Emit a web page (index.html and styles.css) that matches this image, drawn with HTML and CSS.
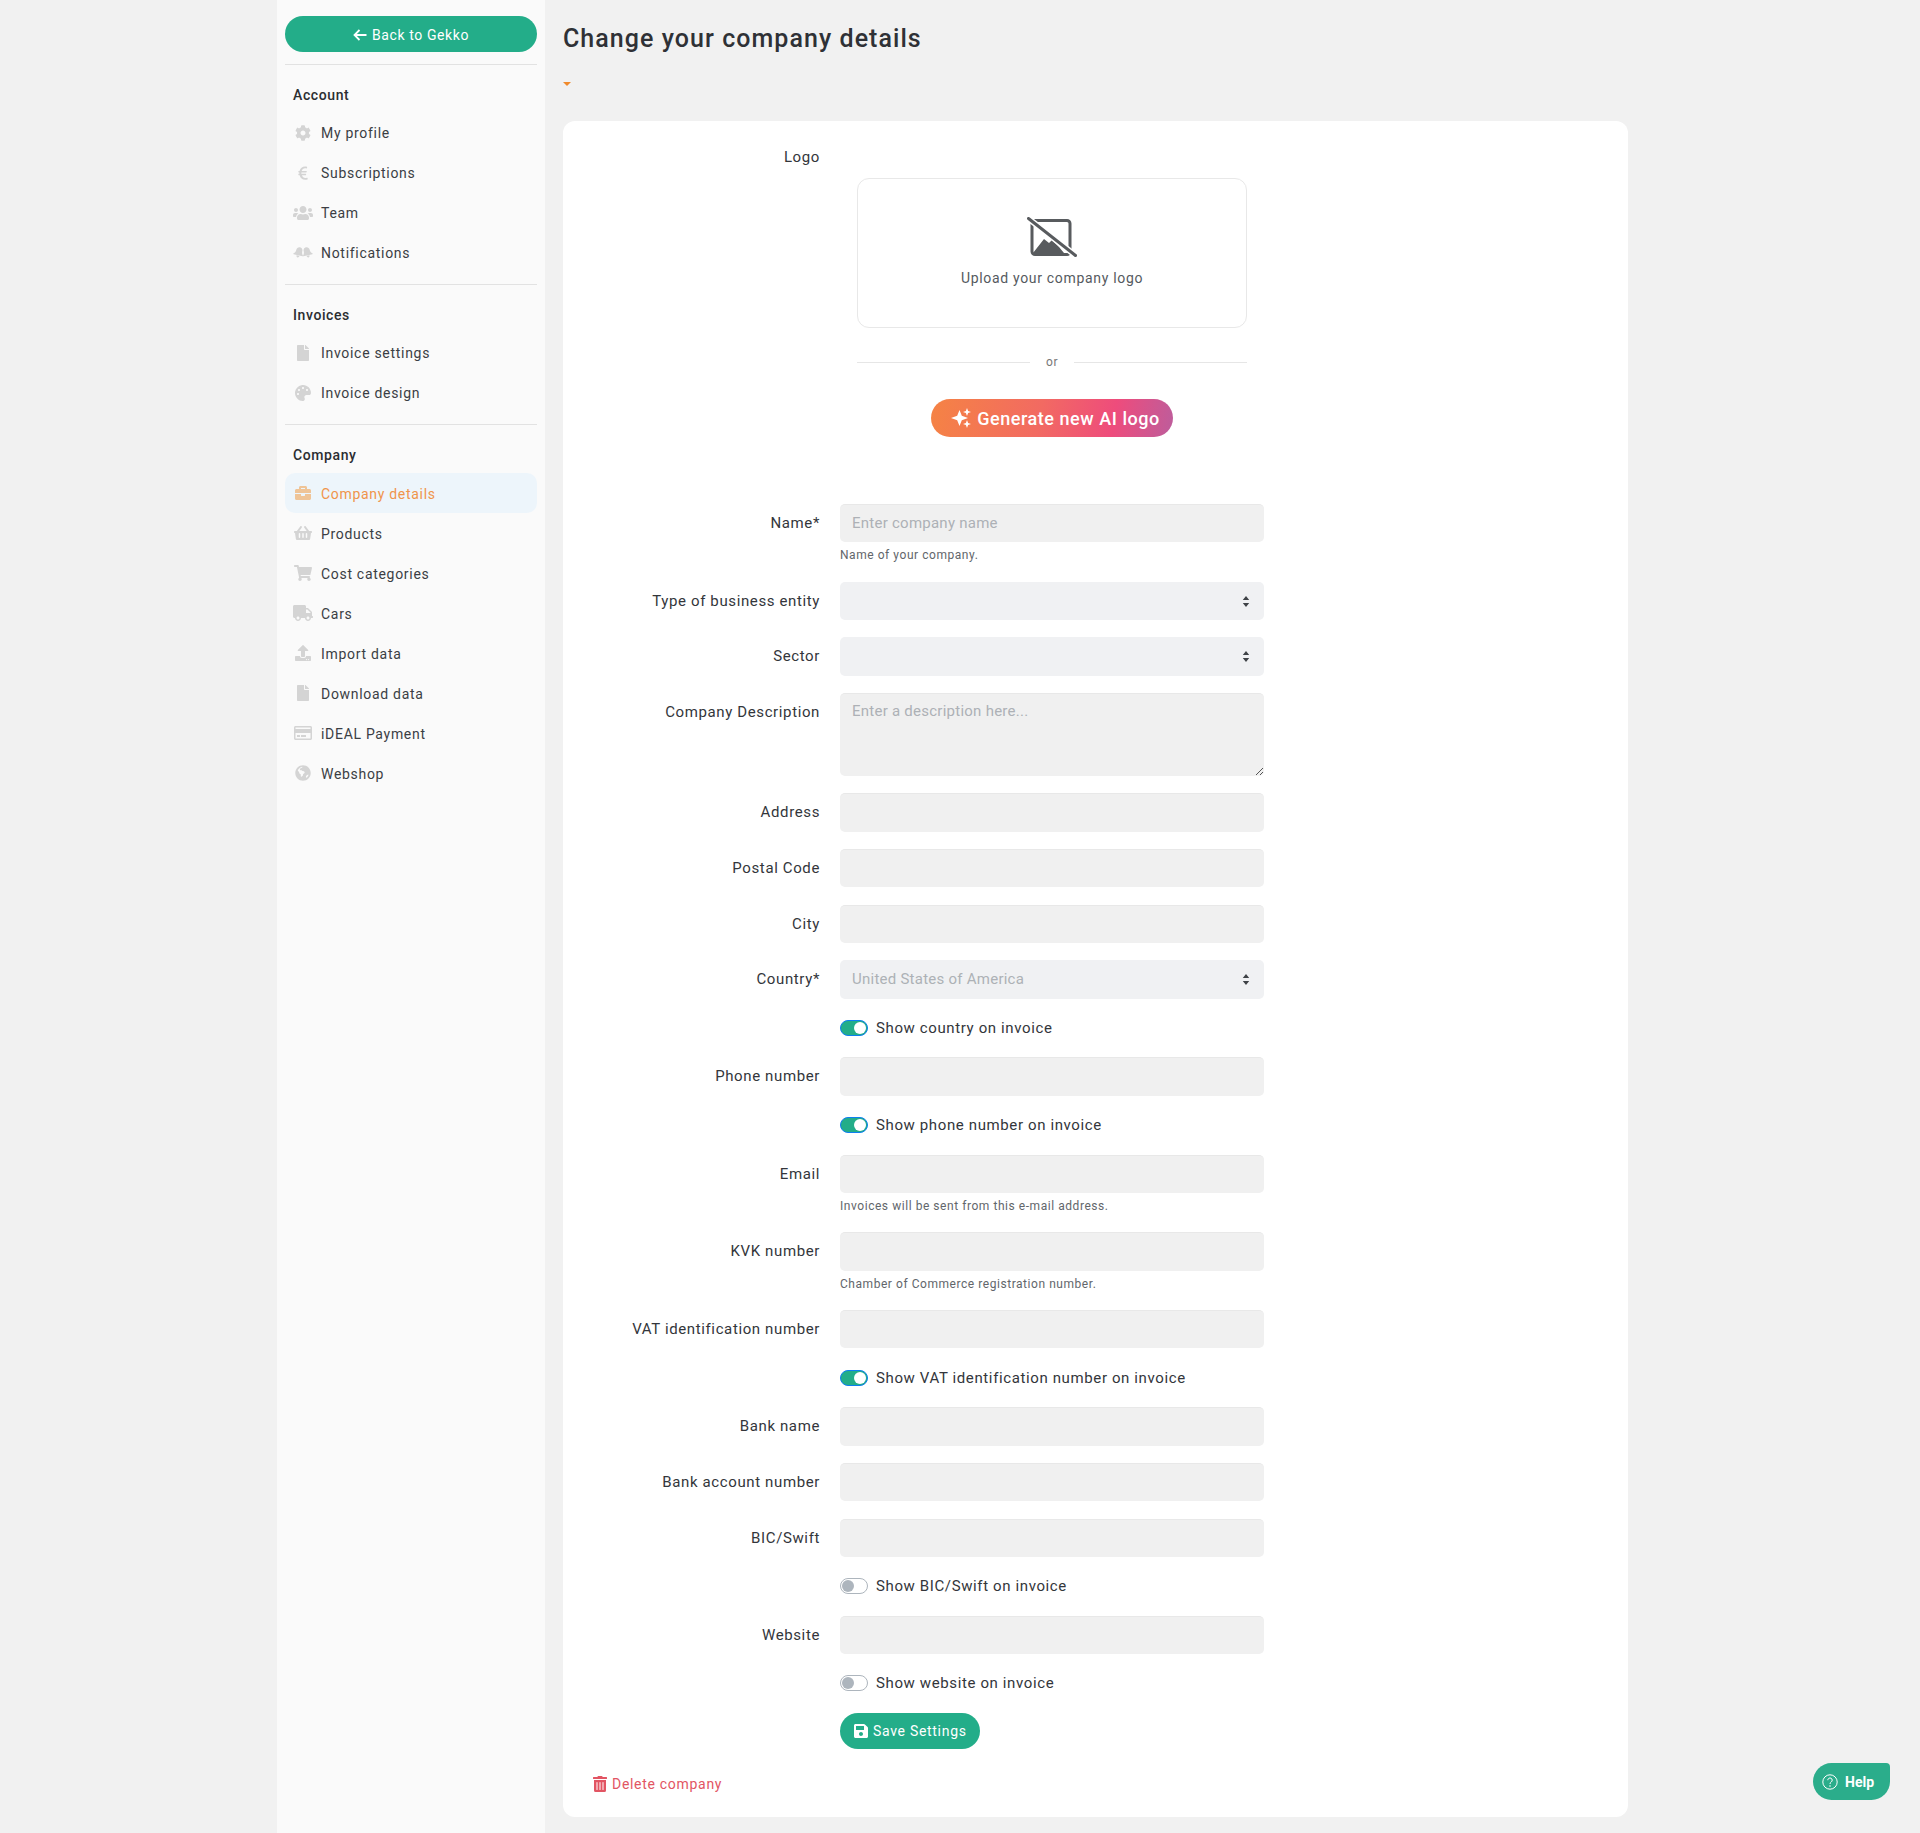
FILE: index.html
```html
<!DOCTYPE html>
<html lang="en">
<head>
<meta charset="utf-8">
<title>Change your company details</title>
<link rel="stylesheet" href="styles.css">
</head>
<body>
<svg class="sprite" aria-hidden="true">
  <symbol id="i-cog" viewBox="0 0 512 512"><path d="M487.4 315.7l-42.6-24.6c4.3-23.2 4.3-47 0-70.2l42.6-24.6c4.9-2.8 7.1-8.6 5.5-14-11.1-35.6-30-67.8-54.7-94.6-3.8-4.1-10-5.1-14.8-2.3L380.8 110c-17.9-15.4-38.5-27.3-60.8-35.1V25.8c0-5.6-3.9-10.5-9.4-11.7-36.7-8.2-74.3-7.8-109.2 0-5.5 1.2-9.4 6.1-9.4 11.7V75c-22.2 7.9-42.8 19.8-60.8 35.1L88.7 85.5c-4.9-2.8-11-1.9-14.8 2.3-24.7 26.7-43.6 58.9-54.7 94.6-1.7 5.4.6 11.2 5.5 14L67.3 221c-4.3 23.2-4.3 47 0 70.2l-42.6 24.6c-4.9 2.8-7.1 8.6-5.5 14 11.1 35.6 30 67.8 54.7 94.6 3.8 4.1 10 5.1 14.8 2.3l42.6-24.6c17.9 15.4 38.5 27.3 60.8 35.1v49.2c0 5.6 3.9 10.5 9.4 11.7 36.7 8.2 74.3 7.8 109.2 0 5.5-1.2 9.4-6.1 9.4-11.7v-49.2c22.2-7.9 42.8-19.8 60.8-35.1l42.6 24.6c4.9 2.8 11 1.9 14.8-2.3 24.7-26.7 43.6-58.9 54.7-94.6 1.5-5.5-.7-11.3-5.6-14.1zM256 336c-44.1 0-80-35.9-80-80s35.9-80 80-80 80 35.9 80 80-35.9 80-80 80z"/></symbol>
  <symbol id="i-euro" viewBox="0 0 320 512"><path d="M310 440c-5-19-7-27-13-33-4-4-10-3-14-2-12 4-30 8-50 8-51 0-92-32-109-85h120c6 0 11-4 12-10l5-23c2-7-4-15-12-15H109c-1-14-1-29 0-43h155c6 0 11-4 12-10l5-24c1-7-4-15-12-15H119c17-49 55-81 107-81 16 0 32 3 43 6 6 2 13-2 15-8l9-33c2-7-2-13-8-15-14-4-35-8-58-8-89 0-155 58-177 139H24c-7 0-12 5-12 12v24c0 7 5 12 12 12h20c-1 14-1 30 0 43H24c-7 0-12 5-12 12v23c0 7 5 12 12 12h29c20 90 85 147 176 147 28 0 53-6 72-13 6-2 11-9 9-15z"/></symbol>
  <symbol id="i-users" viewBox="0 0 640 512"><path d="M96 224c35.3 0 64-28.7 64-64s-28.7-64-64-64-64 28.7-64 64 28.7 64 64 64zm448 0c35.3 0 64-28.7 64-64s-28.7-64-64-64-64 28.7-64 64 28.7 64 64 64zm32 32h-64c-17.6 0-33.5 7.1-45.1 18.6 40.3 22.1 68.9 62 75.1 109.4h66c17.7 0 32-14.3 32-32v-32c0-35.3-28.7-64-64-64zm-256 0c61.9 0 112-50.1 112-112S381.9 32 320 32 208 82.1 208 144s50.1 112 112 112zm76.8 32h-8.3c-20.8 10-43.9 16-68.5 16s-47.6-6-68.5-16h-8.3C179.6 288 128 339.6 128 403.2V432c0 26.5 21.5 48 48 48h288c26.5 0 48-21.5 48-48v-28.8c0-63.6-51.6-115.2-115.2-115.2zm-223.7-13.4C161.5 263.1 145.6 256 128 256H64c-35.3 0-64 28.7-64 64v32c0 17.7 14.3 32 32 32h65.9c6.3-47.4 34.9-87.3 75.2-109.4z"/></symbol>
  <symbol id="i-bells" viewBox="0 0 640 512">
    <path transform="translate(185 240) rotate(14) scale(.82)" d="M0-210c-70 0-120 55-120 125 0 70-20 120-70 165-10 10-4 30 12 30h356c16 0 22-20 12-30-50-45-70-95-70-165 0-70-50-125-120-125zM-60 130c5 40 30 70 60 70s55-30 60-70z"/>
    <path transform="translate(455 240) rotate(-14) scale(.82)" d="M0-210c-70 0-120 55-120 125 0 70-20 120-70 165-10 10-4 30 12 30h356c16 0 22-20 12-30-50-45-70-95-70-165 0-70-50-125-120-125zM-60 130c5 40 30 70 60 70s55-30 60-70z"/>
  </symbol>
  <symbol id="i-file" viewBox="0 0 384 512"><path d="M224 136V0H24C10.7 0 0 10.7 0 24v464c0 13.3 10.7 24 24 24h336c13.3 0 24-10.7 24-24V160H248c-13.2 0-24-10.8-24-24zm160-14.1v6.1H256V0h6.1c6.4 0 12.5 2.5 17 7l97.9 98c4.5 4.5 7 10.6 7 16.9z"/></symbol>
  <symbol id="i-palette" viewBox="0 0 512 512"><path d="M204.3 5C104.9 24.4 24.8 104.3 5.2 203.4c-37 187 131.7 326.4 258.8 306.7 41.2-6.4 61.4-54.6 42.5-91.7-23.1-45.4 9.9-98.4 60.9-98.4h79.7c35.8 0 64.8-29.6 64.9-65.3C511.5 97.1 368.1-26.9 204.3 5zM96 320c-17.7 0-32-14.3-32-32s14.3-32 32-32 32 14.3 32 32-14.3 32-32 32zm32-128c-17.7 0-32-14.3-32-32s14.3-32 32-32 32 14.3 32 32-14.3 32-32 32zm128-64c-17.7 0-32-14.3-32-32s14.3-32 32-32 32 14.3 32 32-14.3 32-32 32zm128 64c-17.7 0-32-14.3-32-32s14.3-32 32-32 32 14.3 32 32-14.3 32-32 32z"/></symbol>
  <symbol id="i-briefcase" viewBox="0 0 512 512"><path d="M320 336c0 8.84-7.16 16-16 16h-96c-8.84 0-16-7.16-16-16v-48H0v144c0 25.6 22.4 48 48 48h416c25.6 0 48-22.4 48-48V288H320v48zm144-208h-80V80c0-25.6-22.4-48-48-48H176c-25.6 0-48 22.4-48 48v48H48c-25.6 0-48 22.4-48 48v80h512v-80c0-25.6-22.4-48-48-48zm-144 0H192V96h128v32z"/></symbol>
  <symbol id="i-basket" viewBox="0 0 576 512"><path d="M576 216v16c0 13.255-10.745 24-24 24h-8l-26.113 182.788C514.509 462.435 494.257 480 470.37 480H105.63c-23.887 0-44.139-17.565-47.518-41.212L32 256h-8c-13.255 0-24-10.745-24-24v-16c0-13.255 10.745-24 24-24h67.341l106.78-146.821c10.395-14.292 30.407-17.453 44.701-7.058 14.293 10.395 17.453 30.408 7.058 44.701L170.477 192h235.046L326.12 82.821c-10.395-14.292-7.234-34.306 7.059-44.701 14.291-10.395 34.306-7.235 44.701 7.058L484.659 192H552c13.255 0 24 10.745 24 24zM312 392V280c0-13.255-10.745-24-24-24s-24 10.745-24 24v112c0 13.255 10.745 24 24 24s24-10.745 24-24zm112 0V280c0-13.255-10.745-24-24-24s-24 10.745-24 24v112c0 13.255 10.745 24 24 24s24-10.745 24-24zm-224 0V280c0-13.255-10.745-24-24-24s-24 10.745-24 24v112c0 13.255 10.745 24 24 24s24-10.745 24-24z"/></symbol>
  <symbol id="i-cart" viewBox="0 0 576 512"><path d="M528.12 301.319l47.273-208C578.806 78.301 567.391 64 551.99 64H159.208l-9.166-44.81C147.758 8.021 137.93 0 126.529 0H24C10.745 0 0 10.745 0 24v16c0 13.255 10.745 24 24 24h69.883l70.248 343.435C147.325 417.1 136 435.222 136 456c0 30.928 25.072 56 56 56s56-25.072 56-56c0-15.674-6.447-29.835-16.824-40h209.647C430.447 426.165 424 440.326 424 456c0 30.928 25.072 56 56 56s56-25.072 56-56c0-22.172-12.888-41.332-31.579-50.405l5.517-24.276c3.413-15.018-8.002-29.319-23.403-29.319H218.117l-6.545-32h293.145c11.206 0 20.92-7.754 23.403-18.681z"/></symbol>
  <symbol id="i-truck" viewBox="0 0 640 512"><path d="M624 352h-16V243.9c0-12.7-5.1-24.9-14.1-33.9L494 110.1c-9-9-21.2-14.1-33.9-14.1H416V48c0-26.5-21.5-48-48-48H48C21.5 0 0 21.5 0 48v320c0 26.5 21.5 48 48 48h16c0 53 43 96 96 96s96-43 96-96h128c0 53 43 96 96 96s96-43 96-96h48c8.8 0 16-7.2 16-16v-32c0-8.8-7.2-16-16-16zM160 464c-26.5 0-48-21.5-48-48s21.5-48 48-48 48 21.5 48 48-21.5 48-48 48zm320 0c-26.5 0-48-21.5-48-48s21.5-48 48-48 48 21.5 48 48-21.5 48-48 48zm80-208H416V144h44.1l99.9 99.9V256z"/></symbol>
  <symbol id="i-upload" viewBox="0 0 512 512"><path d="M296 384h-80c-13.3 0-24-10.7-24-24V192h-87.7c-17.8 0-26.7-21.5-14.1-34.1L242.3 5.7c7.5-7.5 19.8-7.5 27.3 0l152.2 152.2c12.6 12.6 3.7 34.1-14.1 34.1H320v168c0 13.3-10.7 24-24 24zm216-8v112c0 13.3-10.7 24-24 24H24c-13.3 0-24-10.7-24-24V376c0-13.3 10.7-24 24-24h136v8c0 30.9 25.1 56 56 56h80c30.9 0 56-25.1 56-56v-8h136c13.3 0 24 10.7 24 24zm-124 88c0-11-9-20-20-20s-20 9-20 20 9 20 20 20 20-9 20-20zm64 0c0-11-9-20-20-20s-20 9-20 20 9 20 20 20 20-9 20-20z"/></symbol>
  <symbol id="i-card" viewBox="0 0 576 512"><path d="M527.9 32H48.1C21.5 32 0 53.5 0 80v352c0 26.5 21.5 48 48.1 48h479.8c26.6 0 48.1-21.500 48.1-48V80c0-26.5-21.5-48-48.1-48zM54.1 80h467.800c3.300 0 6 2.700 6 6v42H48.100V86c0-3.300 2.700-6 6-6zm467.800 352H54.100c-3.300 0-6-2.700-6-6V256h479.800v170c0 3.300-2.700 6-6 6zM192 332v40c0 6.600-5.400 12-12 12h-72c-6.600 0-12-5.400-12-12v-40c0-6.600 5.400-12 12-12h72c6.600 0 12 5.400 12 12zm192 0v40c0 6.600-5.400 12-12 12H236c-6.600 0-12-5.400-12-12v-40c0-6.600 5.400-12 12-12h136c6.600 0 12 5.400 12 12z"/></symbol>
  <symbol id="i-globe" viewBox="0 0 496 512"><path fill-rule="evenodd" d="M248 8C111 8 0 119 0 256s111 248 248 248 248-111 248-248S385 8 248 8zm-16 62l-34 24-30 12-22 34 18 28 40-4 28 26 46 8 26 36-22 34-30 22-8 46-38 38-26-10-6-66-40-28-14-50-40-46c24-60 76-106 140-122 4 8 8 12 12 18zm190 250c-8 34-32 64-62 86l-20-14 6-40 34-36 34-12z"/></symbol>
  <symbol id="i-save" viewBox="0 0 448 512"><path d="M433.941 129.941l-83.882-83.882A48 48 0 0 0 316.118 32H48C21.49 32 0 53.49 0 80v352c0 26.51 21.49 48 48 48h352c26.51 0 48-21.49 48-48V163.882a48 48 0 0 0-14.059-33.941zM224 416c-35.346 0-64-28.654-64-64 0-35.346 28.654-64 64-64s64 28.654 64 64c0 35.346-28.654 64-64 64zm96-304.52V212c0 6.627-5.373 12-12 12H76c-6.627 0-12-5.373-12-12V108c0-6.627 5.373-12 12-12h228.52c3.183 0 6.235 1.264 8.485 3.515l3.48 3.48A11.996 11.996 0 0 1 320 111.48z"/></symbol>
  <symbol id="i-trash" viewBox="0 0 448 512"><path d="M32 464a48 48 0 0 0 48 48h288a48 48 0 0 0 48-48V128H32zm272-256a16 16 0 0 1 32 0v224a16 16 0 0 1-32 0zm-96 0a16 16 0 0 1 32 0v224a16 16 0 0 1-32 0zm-96 0a16 16 0 0 1 32 0v224a16 16 0 0 1-32 0zM432 32H312l-9.4-18.7A24 24 0 0 0 281.1 0H166.8a23.72 23.72 0 0 0-21.4 13.3L136 32H16A16 16 0 0 0 0 48v32a16 16 0 0 0 16 16h416a16 16 0 0 0 16-16V48a16 16 0 0 0-16-16z"/></symbol>
  <symbol id="i-arrows" viewBox="0 0 8 12"><path d="M4 0L7.5 4.400H.5zM4 12L.5 7.600h7z"/></symbol>
</svg>

<div class="app">
  <aside class="sidebar">
    <a class="back-btn"><svg class="back-arrow" viewBox="0 0 14 12"><path d="M6.500 1L1.500 6l5 5M2 6h11.500"/></svg>Back to Gekko</a>
    <hr class="nav-rule">
    <h6 class="nav-heading">Account</h6>
    <ul class="nav-list">
      <li class="nav-item"><svg class="nav-icon"><use href="#i-cog"/></svg>My profile</li>
      <li class="nav-item"><svg class="nav-icon"><use href="#i-euro"/></svg>Subscriptions</li>
      <li class="nav-item"><svg class="nav-icon wide"><use href="#i-users"/></svg>Team</li>
      <li class="nav-item"><svg class="nav-icon wide"><use href="#i-bells"/></svg>Notifications</li>
    </ul>
    <hr class="nav-rule spaced">
    <h6 class="nav-heading">Invoices</h6>
    <ul class="nav-list">
      <li class="nav-item"><svg class="nav-icon"><use href="#i-file"/></svg>Invoice settings</li>
      <li class="nav-item"><svg class="nav-icon"><use href="#i-palette"/></svg>Invoice design</li>
    </ul>
    <hr class="nav-rule spaced">
    <h6 class="nav-heading">Company</h6>
    <ul class="nav-list company">
      <li class="nav-item active"><svg class="nav-icon"><use href="#i-briefcase"/></svg>Company details</li>
      <li class="nav-item"><svg class="nav-icon mid"><use href="#i-basket"/></svg>Products</li>
      <li class="nav-item"><svg class="nav-icon mid"><use href="#i-cart"/></svg>Cost categories</li>
      <li class="nav-item"><svg class="nav-icon wide"><use href="#i-truck"/></svg>Cars</li>
      <li class="nav-item"><svg class="nav-icon"><use href="#i-upload"/></svg>Import data</li>
      <li class="nav-item"><svg class="nav-icon"><use href="#i-file"/></svg>Download data</li>
      <li class="nav-item"><svg class="nav-icon mid"><use href="#i-card"/></svg>iDEAL Payment</li>
      <li class="nav-item"><svg class="nav-icon"><use href="#i-globe"/></svg>Webshop</li>
    </ul>
  </aside>

  <main class="content">
    <h1 class="page-title">Change your company details</h1>
    <span class="title-caret"></span>
    <section class="card">
      <div class="logo-label"><label class="field-label">Logo</label></div>
      <div class="logo-block">
        <div class="upload-box">
          <svg class="upload-icon" viewBox="0 0 50 40">
            <path class="frame" d="M6 3.500h34a3 3 0 0 1 3 3v28a3 3 0 0 1-3 3H8a3 3 0 0 1-3-3V6.500"/>
            <path class="mount" d="M6 36l11-14 5 4 3-3 7 7 5 6z"/>
            <path class="slash-gap" d="M1.500 1.500l47 37"/>
            <path class="slash" d="M1.500 1.500l47 37"/>
          </svg>
          <span class="upload-text">Upload your company logo</span>
        </div>
        <div class="or-line"><span class="or-text">or</span></div>
        <a class="ai-btn">
          <svg class="sparkle" viewBox="0 0 20 20"><path d="M8.500 2l2.300 5.700L17 10l-6.200 2.300L8.500 18l-2.300-5.700L0 10l6.200-2.300zM16 0l1.100 2.900L20 4l-2.900 1.100L16 8l-1.100-2.900L12 4l2.900-1.100zM16 12l1.100 2.900 2.900 1.100-2.900 1.100L16 20l-1.100-2.900L12 16l2.900-1.100z"/></svg>
          Generate new AI logo
        </a>
      </div>

      <div class="form-row"><label class="field-label">Name*</label><div><div class="control placeholder">Enter company name</div><small class="help">Name of your company.</small></div></div>
      <div class="form-row"><label class="field-label">Type of business entity</label><div class="control select"><svg class="arrows"><use href="#i-arrows"/></svg></div></div>
      <div class="form-row"><label class="field-label">Sector</label><div class="control select"><svg class="arrows"><use href="#i-arrows"/></svg></div></div>
      <div class="form-row textarea-row"><label class="field-label">Company Description</label><div class="control textarea placeholder">Enter a description here...<svg class="resize" viewBox="0 0 8 8"><path d="M8 1L1 8M8 5L5 8"/></svg></div></div>
      <div class="form-row"><label class="field-label">Address</label><div class="control"></div></div>
      <div class="form-row"><label class="field-label">Postal Code</label><div class="control"></div></div>
      <div class="form-row"><label class="field-label">City</label><div class="control"></div></div>
      <div class="form-row"><label class="field-label">Country*</label><div class="control select placeholder">United States of America<svg class="arrows"><use href="#i-arrows"/></svg></div></div>
      <div class="form-row switch-row"><span></span><div class="switch-wrap"><span class="switch on"></span>Show country on invoice</div></div>
      <div class="form-row"><label class="field-label">Phone number</label><div class="control"></div></div>
      <div class="form-row switch-row"><span></span><div class="switch-wrap"><span class="switch on"></span>Show phone number on invoice</div></div>
      <div class="form-row"><label class="field-label">Email</label><div><div class="control"></div><small class="help">Invoices will be sent from this e-mail address.</small></div></div>
      <div class="form-row"><label class="field-label">KVK number</label><div><div class="control"></div><small class="help">Chamber of Commerce registration number.</small></div></div>
      <div class="form-row"><label class="field-label">VAT identification number</label><div class="control"></div></div>
      <div class="form-row switch-row"><span></span><div class="switch-wrap"><span class="switch on"></span>Show VAT identification number on invoice</div></div>
      <div class="form-row"><label class="field-label">Bank name</label><div class="control"></div></div>
      <div class="form-row"><label class="field-label">Bank account number</label><div class="control"></div></div>
      <div class="form-row"><label class="field-label">BIC/Swift</label><div class="control"></div></div>
      <div class="form-row switch-row"><span></span><div class="switch-wrap"><span class="switch"></span>Show BIC/Swift on invoice</div></div>
      <div class="form-row"><label class="field-label">Website</label><div class="control"></div></div>
      <div class="form-row switch-row"><span></span><div class="switch-wrap"><span class="switch"></span>Show website on invoice</div></div>
      <div class="form-row save-row"><span></span><div><a class="save-btn"><svg class="save-icon"><use href="#i-save"/></svg>Save Settings</a></div></div>
      <a class="delete-link"><svg class="trash-icon"><use href="#i-trash"/></svg>Delete company</a>
    </section>
  </main>
</div>

<a class="help-btn"><svg class="help-icon" viewBox="0 0 16 16"><circle cx="8" cy="8" r="7.200"/><path d="M5.800 6.200a2.200 2.200 0 1 1 3.400 1.800c-.8.600-1.200 1-1.200 2"/><circle class="dot" cx="8" cy="12" r=".8"/></svg>Help</a>
</body>
</html>
```

FILE: styles.css
```css
* { box-sizing: border-box; }
html, body { margin: 0; padding: 0; }
body {
  background: #f1f1f1;
  font-family: Roboto, "Liberation Sans", sans-serif;
  font-size: 14px;
  letter-spacing: .7px;
  color: #33363b;
  min-height: 1833px;
  overflow: hidden;
}
.sprite { display: none; }
.app { display: flex; padding-left: 277px; }

/* sidebar */
.sidebar { width: 268px; min-height: 1833px; background: #fafafa; padding: 16px 8px 0; flex: none; }
.back-btn {
  display: flex; align-items: center; justify-content: center;
  height: 36px; padding-top: 1px; border-radius: 18px; background: #23ad89; color: #fff; font-size: 14px; letter-spacing: .6px;
}
.back-arrow { width: 14px; height: 12px; margin-right: 5px; fill: none; stroke: #fff; stroke-width: 1.8; }
.nav-rule { margin: 12px 0 20px; border: 0; border-top: 1px solid #e2e2e2; }
.nav-rule.spaced { margin-top: 11px; }
.nav-heading { margin: 0 0 8px; padding-left: 8px; font-size: 14px; line-height: 20px; font-weight: 500; color: #2b2d31; letter-spacing: .6px; }
.nav-list { list-style: none; margin: 0; padding: 0; }
.nav-item { display: flex; align-items: center; height: 40px; padding-left: 8px; border-radius: 10px; color: #3b3e44; }
.company .nav-item { padding-top: 1px; }
.nav-icon { width: 16px; height: 16px; margin: 0 10px 0 2px; fill: #d4d4d4; flex: none; }
.nav-icon.wide { width: 20px; margin: 0 8px 0 0; }
.nav-icon.mid { width: 18px; margin: 0 9px 0 1px; }
.company .nav-icon { margin-top: -1px; }
.nav-item.active { background: #edf5fb; color: #f0944a; }
.nav-item.active .nav-icon { fill: #efc497; }

/* main */
.content { width: 1101px; padding: 0 18px; flex: none; font-size: 15px; letter-spacing: .62px; }
.page-title { margin: 0; padding-top: 23px; font-size: 25px; line-height: 32px; font-weight: 500; color: #2f3136; letter-spacing: 1.05px; }
.title-caret {
  display: block; width: 0; height: 0; margin-top: 27px;
  border-left: 4px solid transparent; border-right: 4px solid transparent; border-top: 4px solid #f08a2c;
}
.card { margin-top: 35px; height: 1696px; background: #fff; border-radius: 12px; padding: 26px 0 0; position: relative; }
.field-label { display: block; text-align: right; padding-right: 20px; line-height: 20px; color: #33363b; }
.logo-label { width: 277px; height: 31px; }
.logo-block { width: 424px; margin-left: 277px; height: 326px; display: flex; flex-direction: column; align-items: center; }
.upload-box {
  width: 390px; height: 150px; border: 1px solid #e8e8e8; border-radius: 12px;
  display: flex; flex-direction: column; align-items: center; padding-top: 38px;
}
.upload-icon { width: 50px; height: 40px; }
.upload-icon .frame { fill: none; stroke: #585b5e; stroke-width: 3; }
.upload-icon .mount { fill: #585b5e; }
.upload-icon .slash-gap { stroke: #fff; stroke-width: 6; }
.upload-icon .slash { stroke: #585b5e; stroke-width: 3; stroke-linecap: round; }
.upload-text { margin-top: 11px; color: #555a60; line-height: 20px; font-size: 14px; letter-spacing: .68px; }
.or-line { width: 390px; margin-top: 24px; height: 20px; display: flex; align-items: center; gap: 16px; font-size: 12px; color: #777; }
.or-line::before, .or-line::after { content: ""; flex: 1; border-top: 1px solid #e6e6e6; }
.ai-btn {
  display: flex; align-items: center; justify-content: center;
  width: 242px; height: 38px; margin-top: 27px; padding-left: 7px; border-radius: 19px; color: #fff; font-size: 18px; font-weight: 500; letter-spacing: .55px;
  background: linear-gradient(100deg, #f58344 0%, #f26a62 45%, #ee4c7c 75%, #bd5d9c 100%);
}
.sparkle { width: 20px; height: 20px; margin-right: 6px; fill: #fff; }

.form-row { display: grid; grid-template-columns: 277px 424px; margin-bottom: 17.35px; }
.form-row .field-label { padding-top: 9px; }
.textarea-row { margin-bottom: 17px; }
.control {
  position: relative; height: 38.4px; background: #f0f0f0; border-radius: 5px; border-top: 1px solid #e8e8e8;
  padding: 0 12px; line-height: 37px; color: #adb1b6; font-size: 15px; letter-spacing: .25px;
}
.select { background: #f0f1f3; border-top: 0; line-height: 38px; }
.textarea { height: 83px; line-height: 20px; padding-top: 7px; }
.arrows { position: absolute; right: 14px; top: 14px; width: 8px; height: 11px; fill: #3f4347; }
.resize { position: absolute; right: 1px; bottom: 1px; width: 8px; height: 8px; stroke: #555; stroke-width: 1; fill: none; }
.help { display: block; font-size: 12px; line-height: 18px; margin-top: 4px; color: #62666b; letter-spacing: .55px; }
.switch-row { height: 24px; }
.switch-wrap { display: flex; align-items: center; height: 24px; color: #33363b; }
.switch { position: relative; width: 28px; height: 16px; margin-right: 8px; border-radius: 8px; border: 1px solid #adb5bd; background: #fff; }
.switch::after { content: ""; position: absolute; left: 1px; top: 1px; width: 12px; height: 12px; border-radius: 50%; background: #adb5bd; }
.switch.on { background: #23ad89; border-color: #0d7ff0; }
.switch.on::after { left: 13px; background: #fff; }
.save-row { margin: 0; }
.save-btn {
  display: inline-flex; align-items: center; height: 36px; width: 140px; padding-left: 14px;
  border-radius: 18px; background: #23ad89; color: #fff; font-size: 14px; letter-spacing: .7px;
}
.save-icon { width: 14px; height: 16px; margin-right: 5px; fill: #fff; }
.delete-link { display: flex; align-items: center; margin: 25px 0 0 30px; color: #e25563; line-height: 20px; font-size: 14px; letter-spacing: .7px; }
.trash-icon { width: 14px; height: 16px; margin-right: 5px; fill: #e25563; }

.help-btn {
  position: fixed; left: 1813px; top: 1763px; width: 77px; height: 37px;
  display: flex; align-items: center; padding-left: 9px;
  background: #2bad8b; color: #fff; font-weight: 700; font-size: 14px; letter-spacing: 0;
  border-radius: 19px 4px 19px 19px;
}
.help-icon { width: 16px; height: 16px; margin-right: 7px; fill: none; stroke: #fff; stroke-width: 1; }
.help-icon .dot { fill: #fff; stroke: none; }
```
